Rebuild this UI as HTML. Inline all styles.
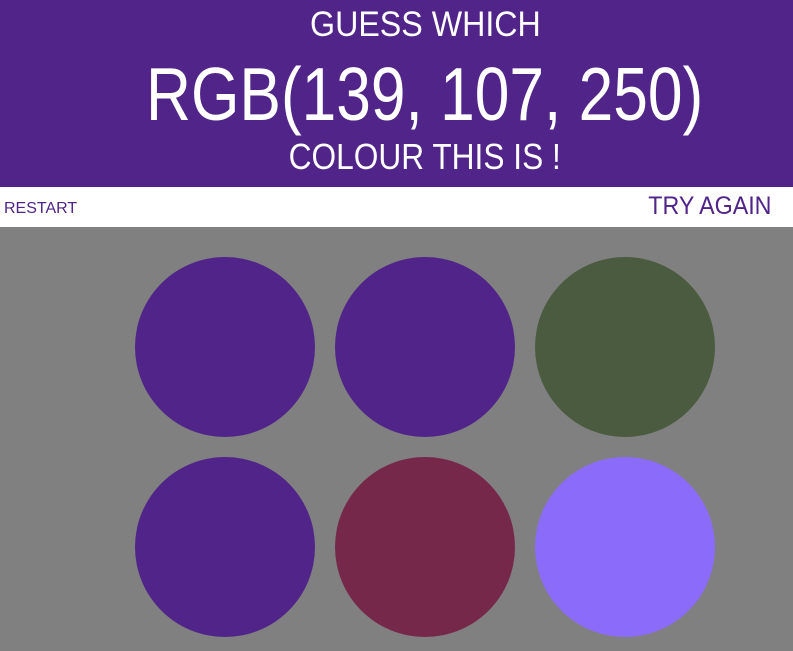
<!DOCTYPE html>
<html><head><style>
body{margin:0;width:793px;height:651px;background:#808080;font-family:"Liberation Sans",sans-serif;overflow:hidden;position:relative}
.hdr{position:absolute;left:0;top:0;width:793px;height:187px;background:#502489;color:#fff}
.t{position:absolute;left:0;width:850px;text-align:center;white-space:nowrap;line-height:1}
.t span{display:inline-block}
.bar{position:absolute;left:0;top:187px;width:793px;height:40px;background:#fff;color:#502489}
.c{position:absolute;width:180px;height:180px;border-radius:50%}
</style></head><body>
<div class="hdr">
<div class="t" style="top:7px;font-size:35px"><span style="transform:scaleX(0.92)">GUESS WHICH</span></div>
<div class="t" style="top:57px;font-size:75px"><span style="transform:scaleX(0.83)">RGB(139, 107, 250)</span></div>
<div class="t" style="top:139px;font-size:36px"><span style="transform:scaleX(0.88)">COLOUR THIS IS !</span></div>
</div>
<div class="bar">
<div style="position:absolute;left:4px;top:13px;font-size:16px">RESTART</div>
<div style="position:absolute;right:22px;top:5px;font-size:25px;transform-origin:right;transform:scaleX(0.93)">TRY AGAIN</div>
</div>
<div class="c" style="left:135px;top:257px;background:#502489"></div>
<div class="c" style="left:335px;top:257px;background:#502489"></div>
<div class="c" style="left:535px;top:257px;background:#4a5b40"></div>
<div class="c" style="left:135px;top:457px;background:#502489"></div>
<div class="c" style="left:335px;top:457px;background:#76284a"></div>
<div class="c" style="left:535px;top:457px;background:#8b6bfa"></div>
</body></html>
